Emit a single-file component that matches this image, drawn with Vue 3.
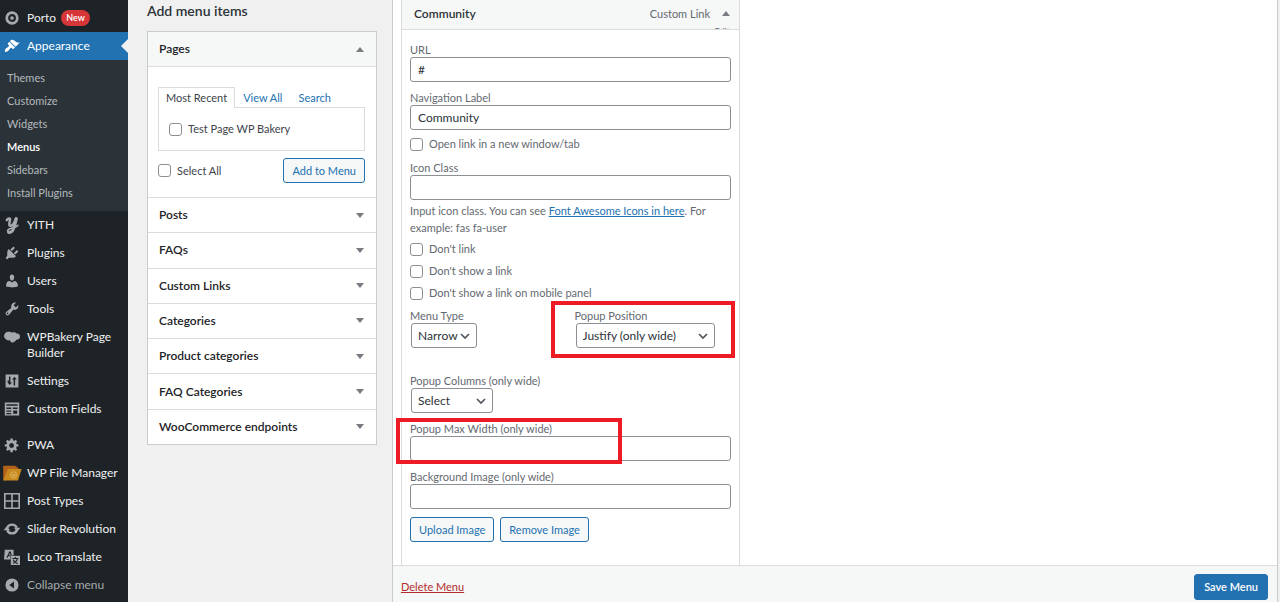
<script setup>
import { ref } from 'vue'

const icons = {
  porto: '<circle cx="10" cy="10" r="6.6" fill="none" stroke="currentColor" stroke-width="3.4"/><circle cx="10" cy="10" r="2.3"/>',
  brush: '<path d="M14.48 11.06L7.41 3.99l1.5-1.5c.5-.56 2.3-.47 3.51.32 1.21.8 1.43 1.28 2.91 2.1 1.18.64 2.45 1.26 4.45.85zm-.71.71L6.7 4.7 4.93 6.47c-.39.39-.39 1.02 0 1.41l1.06 1.06c.39.39.39 1.03 0 1.42-.6.6-1.43 1.11-2.21 1.69-.35.26-.7.53-1.01.84C1.43 14.23.4 16.08 1.4 17.07c.99 1 2.84-.03 4.18-1.36.31-.31.58-.66.85-1.02.57-.78 1.08-1.61 1.69-2.21.39-.39 1.02-.39 1.41 0l1.06 1.06c.39.39 1.02.39 1.41 0z"/>',
  yith: '<g fill="none" stroke="currentColor" stroke-linecap="round" stroke-linejoin="round"><path stroke-width="3.200" d="M3.500 3.800C6 .5 8.300 1.500 7.300 5C6 9.500 6.500 11.300 8.800 11C11.500 10.500 13.500 6 14.800 2"/><path stroke-width="3.800" d="M15.500 2C14.500 6 13.500 10 12 14C10.800 18 8.500 20 5.800 19"/><path stroke-width="2.200" d="M5.800 19C3 17.500 5.500 14.500 10 13.800C13.500 13.200 15.500 12.500 17.200 10.500"/></g>',
  plug: '<path d="M13.11 4.36L9.87 7.6 8 5.73l3.24-3.24c.35-.34 1.05-.2 1.56.32.52.51.66 1.21.31 1.55zm-8 1.77l.91-1.12 9.01 9.01-1.19.84c-.71.71-2.63 1.16-3.82 1.16H6.14L4.9 17.26c-.59.59-1.54.59-2.12 0-.59-.58-.59-1.53 0-2.12l1.24-1.24v-3.88c0-1.13.4-3.19 1.09-3.89zm7.26 3.97l3.24-3.24c.34-.35 1.04-.21 1.55.31.52.51.66 1.21.31 1.55l-3.24 3.25z"/>',
  user: '<path d="M10 9.25c-2.27 0-2.73-3.44-2.73-3.44C7 4.02 7.82 2 9.97 2c2.16 0 2.98 2.02 2.71 3.81 0 0-.41 3.44-2.68 3.44zm0 2.57L12.72 10c2.39 0 4.52 2.33 4.52 4.53v2.49s-3.65 1.13-7.24 1.13c-3.65 0-7.24-1.13-7.24-1.13v-2.49c0-2.25 1.94-4.48 4.47-4.48z"/>',
  wrench: '<path d="M16.68 9.77c-1.34 1.34-3.3 1.67-4.95.99l-5.41 6.52c-.99.99-2.59.99-3.58 0s-.99-2.59 0-3.57l6.52-5.42c-.68-1.65-.35-3.61.99-4.95 1.28-1.28 3.12-1.62 4.72-1.06l-2.89 2.89 2.82 2.82 2.86-2.87c.53 1.58.18 3.39-1.08 4.65zM3.81 16.21c.4.39 1.04.39 1.43 0 .4-.4.4-1.04 0-1.43-.39-.4-1.03-.4-1.43 0-.39.39-.39 1.03 0 1.43z"/>',
  bakery: '<path d="M5.500 3.500C7.500 3 9 3.600 10 4.600C12 3.500 14.500 4 15.500 5.600C18.500 5.300 20.500 7.400 20 10C19.600 12.500 17.500 13.700 15.300 13.400C14.500 15.500 12 17.200 9.500 16.800C8.200 16.500 7.700 15.400 7.800 14.200C4.500 15 .500 12.500 0 9C0 5.800 2.500 3.600 5.500 3.500Z"/>',
  sliders: '<path fill-rule="evenodd" d="M2 2h16v16H2zM6.200 4.500v5H4.500v2h1.700v0L4.300 12l2.900 3 2.900-3H8V4.500zM12 15.500h1.900V8H16l-3-3.300L10.100 8H12z"/>',
  fields: '<path fill-rule="evenodd" d="M1 2h18v16H1zM3 4v2h14V4zM3 8v2h6V8zM11 8v2h6V8zM3 12v1.500h6V12zM3 15v1.500h6V15zM11.500 12v4h5v-4z"/>',
  gear: '<path d="M18 12h-2.180c-.17.7-.44 1.350-.81 1.930l1.540 1.540-2.100 2.100-1.540-1.540c-.58.36-1.230.63-1.910.79V19H8v-2.180c-.68-.16-1.330-.43-1.910-.79l-1.540 1.540-2.120-2.120 1.540-1.540c-.36-.58-.63-1.230-.79-1.910H1V9.030h2.170c.16-.7.44-1.350.8-1.940L2.430 5.550l2.100-2.100 1.540 1.540c.58-.37 1.240-.64 1.930-.81V2h3v2.180c.68.16 1.330.43 1.910.79l1.540-1.540 2.120 2.120-1.540 1.540c.36.59.64 1.240.8 1.940H18V12zm-8.500 1.500c1.660 0 3-1.340 3-3s-1.340-3-3-3-3 1.340-3 3 1.340 3 3 3z"/>',
  folder: '<path fill="#b3611b" d="M-1 1h15l4 3v8L3 19H-1z"/><path fill="#c98a1d" d="M5 5H22l-4.500 14.500H-1z"/><g fill="none" stroke="#dfb56c"><circle cx="12" cy="12.500" r="4"/><path d="M9.500 11l1.500 3.500 1-3 1 3L14.500 11"/></g>',
  grid: '<path fill="none" stroke="currentColor" stroke-width="2" d="M1 1h18v18H1zM10 1v18M1 10h18"/>',
  revolve: '<g fill="none" stroke="currentColor" stroke-width="3"><path d="M4 8.500A6.500 6.500 0 0 1 16 8.500"/><path d="M16 11.500A6.500 6.500 0 0 1 4 11.500"/></g><path d="M-.5 11.500h8L3.500 6.500zM20.500 8.500h-8l4 5z"/>',
  translate: '<path fill-rule="evenodd" d="M1 1h11v7H8v5H0zM3 11h1.500l.8-2h2v-1.500H6L7.500 5l.7 3h1.500L8.500 3h-2z"/><path d="M8.500 8.500H20V20H8.500z"/><path fill="none" stroke="#1d2327" stroke-width="1.300" d="M10.500 12h7.500M14.200 10v2M16.800 12c-.8 3-2.800 5-5.600 6M11.500 13.500c1 2.500 3 4 5.800 4.500"/>',
  collapse: '<path fill-rule="evenodd" d="M10 1.800a8.200 8.200 0 1 0 0 16.400a8.200 8.200 0 0 0 0-16.400zM12.500 5.500v9L6.500 10z"/>'
}

const submenu = ['Themes', 'Customize', 'Widgets', 'Menus', 'Sidebars', 'Install Plugins']
const menu = [
  { label: 'YITH', icon: 'yith' },
  { label: 'Plugins', icon: 'plug' },
  { label: 'Users', icon: 'user' },
  { label: 'Tools', icon: 'wrench' },
  { label: 'WPBakery Page Builder', icon: 'bakery' },
  { label: 'Settings', icon: 'sliders' },
  { label: 'Custom Fields', icon: 'fields' }
]
const extraMenu = [
  { label: 'PWA', icon: 'gear' },
  { label: 'WP File Manager', icon: 'folder' },
  { label: 'Post Types', icon: 'grid' },
  { label: 'Slider Revolution', icon: 'revolve' },
  { label: 'Loco Translate', icon: 'translate' }
]
const sections = ['Posts', 'FAQs', 'Custom Links', 'Categories', 'Product categories', 'FAQ Categories', 'WooCommerce endpoints']

const url = ref('#')
const label = ref('Community')
const iconClass = ref('')
const maxWidth = ref('')
const background = ref('')
</script>

<template>
  <div class="shell">
    <nav class="sidebar">
      <a class="item" href="#"><svg class="icon" viewBox="0 0 20 20" v-html="icons.porto" /><span>Porto</span><span class="badge">New</span></a>
      <a class="item current" href="#"><svg class="icon" viewBox="0 0 20 20" v-html="icons.brush" /><span>Appearance</span></a>
      <div class="submenu">
        <a v-for="s in submenu" :key="s" href="#" :class="{ active: s === 'Menus' }">{{ s }}</a>
      </div>
      <a v-for="m in menu" :key="m.label" class="item" href="#"><svg class="icon" viewBox="0 0 20 20" v-html="icons[m.icon]" /><span>{{ m.label }}</span></a>
      <div class="separator"></div>
      <a v-for="m in extraMenu" :key="m.label" class="item" href="#"><svg class="icon" viewBox="0 0 20 20" v-html="icons[m.icon]" /><span>{{ m.label }}</span></a>
      <button class="item collapse" type="button"><svg class="icon" viewBox="0 0 20 20" v-html="icons.collapse" /><span>Collapse menu</span></button>
    </nav>

    <section class="add">
      <h2>Add menu items</h2>
      <div class="accordion">
        <button class="head open" type="button">Pages<span class="arrow up"></span></button>
        <div class="pages">
          <div class="tabs">
            <a class="tab selected" href="#">Most Recent</a>
            <a class="tab" href="#">View All</a>
            <a class="tab" href="#">Search</a>
          </div>
          <div class="tabpanel">
            <label class="check"><input type="checkbox"><span>Test Page WP Bakery</span></label>
          </div>
          <div class="actions">
            <label class="check"><input type="checkbox"><span>Select All</span></label>
            <button class="btn" type="button">Add to Menu</button>
          </div>
        </div>
        <div class="sections">
          <button v-for="s in sections" :key="s" class="head" type="button">{{ s }}<span class="arrow"></span></button>
        </div>
      </div>
    </section>

    <main class="editor">
      <div class="canvas">
        <article class="menu-item">
          <header class="bar">
            <strong>Community</strong>
            <span class="kind">Custom Link</span>
            <span class="toggle"><span class="arrow up"></span></span>
            <a class="edit" href="#">Edit</a>
          </header>
          <form class="settings" @submit.prevent>
            <div class="field">
              <label for="url">URL</label>
              <input id="url" v-model="url" type="text">
            </div>
            <div class="field">
              <label for="nav">Navigation Label</label>
              <input id="nav" v-model="label" type="text">
            </div>
            <label class="check"><input type="checkbox"><span>Open link in a new window/tab</span></label>
            <div class="field hinted">
              <label for="icon">Icon Class</label>
              <input id="icon" v-model="iconClass" type="text">
              <p class="hint">Input icon class. You can see <a href="#">Font Awesome Icons in here</a>. For example: fas fa-user</p>
            </div>
            <div class="checks">
              <label class="check"><input type="checkbox"><span>Don't link</span></label>
              <label class="check"><input type="checkbox"><span>Don't show a link</span></label>
              <label class="check"><input type="checkbox"><span>Don't show a link on mobile panel</span></label>
            </div>
            <div class="pair">
              <div class="field">
                <label for="type">Menu Type</label>
                <select id="type" class="narrow"><option>Narrow</option><option>Wide</option></select>
              </div>
              <div class="field">
                <label for="position">Popup Position</label>
                <select id="position" class="wide"><option>Justify (only wide)</option><option>Left</option><option>Right</option></select>
                <div class="mark position-mark"></div>
              </div>
            </div>
            <div class="field">
              <label for="columns">Popup Columns (only wide)</label>
              <select id="columns" class="medium"><option>Select</option></select>
            </div>
            <div class="field">
              <label for="max">Popup Max Width (only wide)</label>
              <input id="max" v-model="maxWidth" type="text">
              <div class="mark width-mark"></div>
            </div>
            <div class="field">
              <label for="bg">Background Image (only wide)</label>
              <input id="bg" v-model="background" type="text">
            </div>
            <div class="buttons">
              <button class="btn" type="button">Upload Image</button>
              <button class="btn" type="button">Remove Image</button>
            </div>
          </form>
        </article>
      </div>
      <footer class="footer">
        <a class="delete" href="#">Delete Menu</a>
        <button class="save" type="button">Save Menu</button>
      </footer>
    </main>
  </div>
</template>

<style>
body {
  background: #f0f0f1;
}
</style>

<style scoped>
.shell,
.shell * {
  box-sizing: border-box;
}
.shell {
  display: flex;
  min-height: 100vh;
  font-family: Lato, "Open Sans", sans-serif;
  font-size: 11px;
  line-height: 14px;
  color: #3c434a;
  background: #f0f0f1;
}
button,
input,
select {
  font: inherit;
  color: inherit;
  margin: 0;
}
a {
  color: #2271b1;
}

.sidebar {
  flex: 0 0 128px;
  padding-top: 4px;
  background: #1d2327;
}
.item {
  position: relative;
  display: flex;
  width: 100%;
  padding: 6px 8px 6px 4px;
  gap: 7px;
  border: 0;
  background: none;
  color: #f0f0f1;
  font-size: 12px;
  line-height: 16px;
  text-align: left;
  text-decoration: none;
}
.icon {
  flex: none;
  width: 16px;
  height: 16px;
  fill: currentColor;
  color: #a7aaad;
  overflow: visible;
}
.item.current {
  background: #2271b1;
  color: #fff;
}
.item.current .icon {
  color: #fff;
}
.item.current::after {
  content: "";
  position: absolute;
  right: 0;
  top: 7px;
  border: 7px solid transparent;
  border-left: 0;
  border-right-color: #f0f0f1;
}
.badge {
  padding: 0 5px;
  margin-left: -2px;
  border-radius: 8px;
  background: #d63638;
  color: #fff;
  font-size: 9px;
  font-weight: 600;
}
.submenu {
  padding: 6px 0 7px;
  background: #2c3338;
}
.submenu a {
  display: block;
  padding: 0 7px;
  color: #b4b9be;
  line-height: 23px;
  text-decoration: none;
}
.submenu a.active {
  color: #fff;
  font-weight: 600;
}
.separator {
  height: 8px;
}
.item.collapse {
  color: #a7aaad;
}

.add {
  flex: 0 0 264px;
  padding: 0 15px 0 19px;
}
.add h2 {
  margin: 0;
  padding: 1px 0 10px;
  font-size: 14px;
  font-weight: 600;
  line-height: 20px;
  color: #2c3338;
}
.accordion {
  border: 1px solid #c9cbce;
  background: #fff;
}
.head {
  display: flex;
  align-items: center;
  justify-content: space-between;
  width: 100%;
  padding: 0 12px 0 11px;
  border: 0;
  background: #fff;
  color: #1d2327;
  font-size: 12px;
  font-weight: 600;
}
.head.open {
  height: 35px;
  border-bottom: 1px solid #dcdcde;
  background: #f6f7f7;
}
.sections {
  display: grid;
  grid-auto-rows: 1fr;
  min-height: 247px;
}
.sections .head {
  border-top: 1px solid #dcdcde;
}
.arrow {
  border: 4px solid transparent;
  border-top: 5px solid #787c82;
  border-bottom: 0;
}
.arrow.up {
  border-top: 0;
  border-bottom: 5px solid #787c82;
}
.pages {
  padding: 20px 11px 14px 10px;
}
.tabs {
  display: flex;
}
.tab {
  height: 20px;
  padding: 3px 7px 0;
  border: 1px solid transparent;
  border-bottom: 0;
  text-decoration: none;
}
.tab.selected {
  position: relative;
  height: 21px;
  margin-bottom: -1px;
  border-color: #dcdcde;
  background: #fff;
  color: #3c434a;
}
.tabpanel {
  padding: 14px 10px;
  border: 1px solid #dcdcde;
}
.check {
  display: flex;
  align-items: center;
  gap: 6px;
}
.check input {
  appearance: none;
  flex: none;
  width: 13px;
  height: 13px;
  border: 1px solid #8c8f94;
  border-radius: 3px;
  background: #fff;
}
.actions {
  display: flex;
  align-items: center;
  justify-content: space-between;
  padding-top: 7px;
}
.btn {
  height: 25px;
  padding: 0 8px;
  border: 1px solid #2271b1;
  border-radius: 3px;
  background: #f6f7f7;
  color: #2271b1;
}

.editor {
  flex: 1;
  display: flex;
  flex-direction: column;
  min-width: 0;
  margin-right: 2px;
  border: solid #c9cbce;
  border-width: 0 1px;
  background: #fff;
}
.canvas {
  flex: 1;
  padding-left: 8px;
}
.menu-item {
  width: 339px;
  color: #646970;
}
.bar {
  display: grid;
  grid-template-columns: 1fr auto auto;
  grid-template-rows: 23px 14px;
  align-items: center;
  height: 30px;
  padding: 2px 9px 0 12px;
  border: 1px solid #dcdcde;
  border-top: 0;
  background: #f6f7f7;
  overflow: hidden;
}
.bar strong {
  font-size: 12px;
  font-weight: 600;
  color: #2c3338;
}
.toggle {
  padding-left: 12px;
}
.toggle .arrow {
  display: block;
}
.edit {
  grid-column: 1 / -1;
  justify-self: end;
  color: #646970;
  font-size: 9px;
}
.settings {
  padding: 13px 8px 23px;
  border: solid #dcdcde;
  border-width: 0 1px;
}
.field {
  position: relative;
  margin-bottom: 9px;
}
.field.hinted {
  margin-bottom: 6px;
}
.field label {
  display: block;
}
.field input {
  display: block;
  width: 100%;
  height: 25px;
  padding: 0 7px;
  border: 1px solid #8c8f94;
  border-radius: 3px;
  background: #fff;
  color: #2c3338;
  font-size: 12px;
}
.settings > .check {
  margin: -2px 0 10px;
}
.hint {
  margin: 2px 0 0;
  line-height: 17px;
}
.checks {
  display: grid;
  gap: 8px;
  margin-bottom: 9px;
}
.check {
  line-height: 14px;
}
.field select {
  appearance: none;
  display: block;
  height: 25px;
  margin-left: 1px;
  padding: 0 18px 0 6px;
  border: 1px solid #8c8f94;
  border-radius: 3px;
  background: #fff url("data:image/svg+xml,%3Csvg xmlns='http://www.w3.org/2000/svg' viewBox='0 0 10 6'%3E%3Cpath d='M1 1l4 4 4-4' fill='none' stroke='%2350575e' stroke-width='1.700'/%3E%3C/svg%3E") no-repeat right 6px center / 10px 6px;
  color: #2c3338;
  font-size: 12px;
}
.field .narrow {
  width: 66px;
}
.field .medium {
  width: 82px;
}
.field .wide {
  width: 139px;
}
.pair {
  display: grid;
  grid-template-columns: 1fr 1fr;
  gap: 8px;
  margin-bottom: 17px;
}
.mark {
  position: absolute;
  border: 4px solid #ed1c24;
  pointer-events: none;
}
.position-mark {
  left: -24px;
  top: -8px;
  width: 184px;
  height: 57px;
}
.width-mark {
  left: -14px;
  top: -4px;
  width: 226px;
  height: 46px;
}
.buttons {
  display: flex;
  gap: 6px;
  margin-top: -1px;
}
.footer {
  display: flex;
  align-items: center;
  justify-content: space-between;
  padding: 8px 9px 2px 8px;
  border-top: 1px solid #dcdcde;
  background: #f6f7f7;
}
.delete {
  color: #b32d2e;
}
.save {
  height: 26px;
  padding: 0 9px;
  border: 1px solid #2271b1;
  border-radius: 3px;
  background: #2271b1;
  color: #fff;
  font-weight: 600;
}
</style>
